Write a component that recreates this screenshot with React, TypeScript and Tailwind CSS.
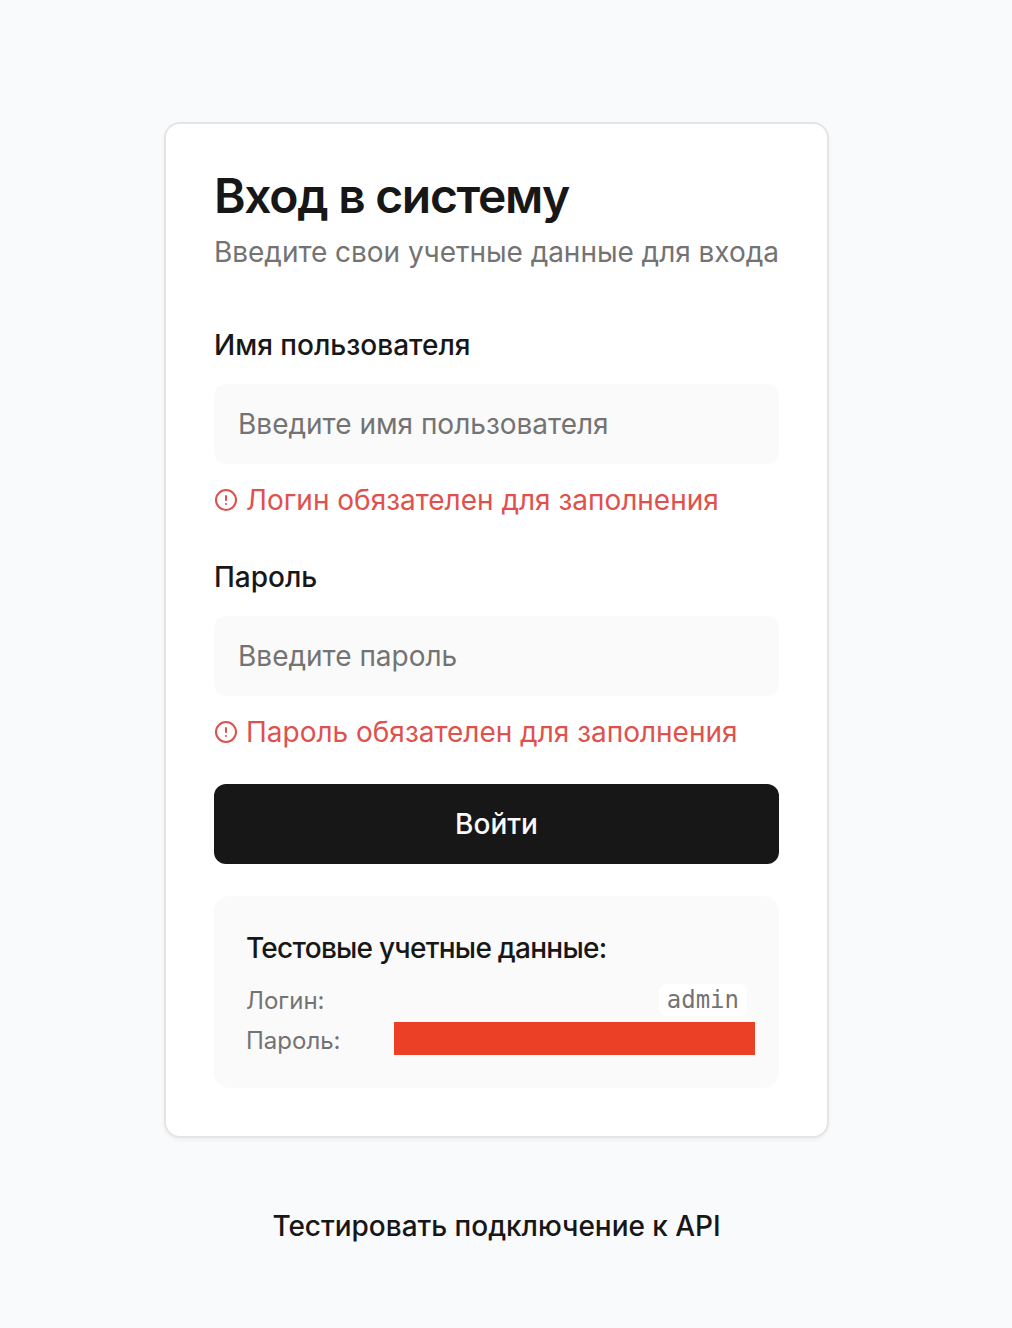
import { CircleAlert } from "lucide-react";

function Field({ label, placeholder, error, type }: { label: string; placeholder: string; error: string; type: string }) {
  return (
    <div className="flex flex-col">
      <label className="h-10 text-[28px] leading-10 font-medium text-[#171717]">{label}</label>
      <input
        type={type}
        placeholder={placeholder}
        className="mt-[19px] h-20 w-full rounded-xl bg-[#fafafa] px-6 text-[28px] outline-none placeholder:text-[#737373]"
      />
      <p className="mt-4 flex h-10 items-center gap-2 text-[28px] leading-10 tracking-[-0.01px] whitespace-nowrap text-[#df514c]">
        <CircleAlert className="size-6 shrink-0" strokeWidth={2} />
        {error}
      </p>
    </div>
  );
}

export default function App() {
  return (
    <main className="flex h-[1328px] w-[1012px] flex-col items-center bg-[#f9fafb] pt-[122px] pr-[19px] font-['Inter',sans-serif] text-[#171717]">
      <section className="flex h-[1016px] w-[665px] flex-col rounded-2xl border-2 border-[#e5e5e5] bg-white p-12 shadow-[0_2px_4px_rgba(0,0,0,0.05)]">
        <h1 className="h-12 text-[48px] leading-[48px] font-semibold tracking-[-1.3px] whitespace-nowrap">Вход в систему</h1>
        <p className="mt-3 h-10 text-[28px] leading-10 tracking-[-0.035px] whitespace-nowrap text-[#737373]">Введите свои учетные данные для входа</p>
        <form className="mt-[53px] flex flex-col">
          <Field label="Имя пользователя" placeholder="Введите имя пользователя" error="Логин обязателен для заполнения" type="text" />
          <div className="mt-[37px]">
            <Field label="Пароль" placeholder="Введите пароль" error="Пароль обязателен для заполнения" type="password" />
          </div>
          <button type="button" className="mt-8 h-20 rounded-xl bg-[#171717] text-[28px] font-medium text-[#fafafa]">Войти</button>
        </form>
        <div className="mt-8 h-48 shrink-0 rounded-2xl bg-[#fafafa] p-8">
          <h2 className="h-10 text-[28px] leading-10 font-medium tracking-[-0.73px] whitespace-nowrap">Тестовые учетные данные:</h2>
          <div className="mt-4 flex h-8 items-center justify-between text-2xl text-[#737373]">
            <span className="pt-px">Логин:</span>
            <code className="h-8 rounded-lg bg-white px-2 font-['DejaVu_Sans_Mono',monospace] leading-8">admin</code>
          </div>
          <div className="mt-2 flex h-8 items-start justify-between text-2xl leading-8 text-[#737373]">
            <span className="pt-px">Пароль:</span>
            <span className="-mt-0.5 -mr-2 h-[33px] w-[361px] shrink-0 bg-[#eb4026]" />
          </div>
        </div>
      </section>
      <button type="button" className="mt-12 h-20 px-8 text-[28px] font-medium tracking-[-0.03px] whitespace-nowrap">Тестировать подключение к API</button>
    </main>
  );
}
